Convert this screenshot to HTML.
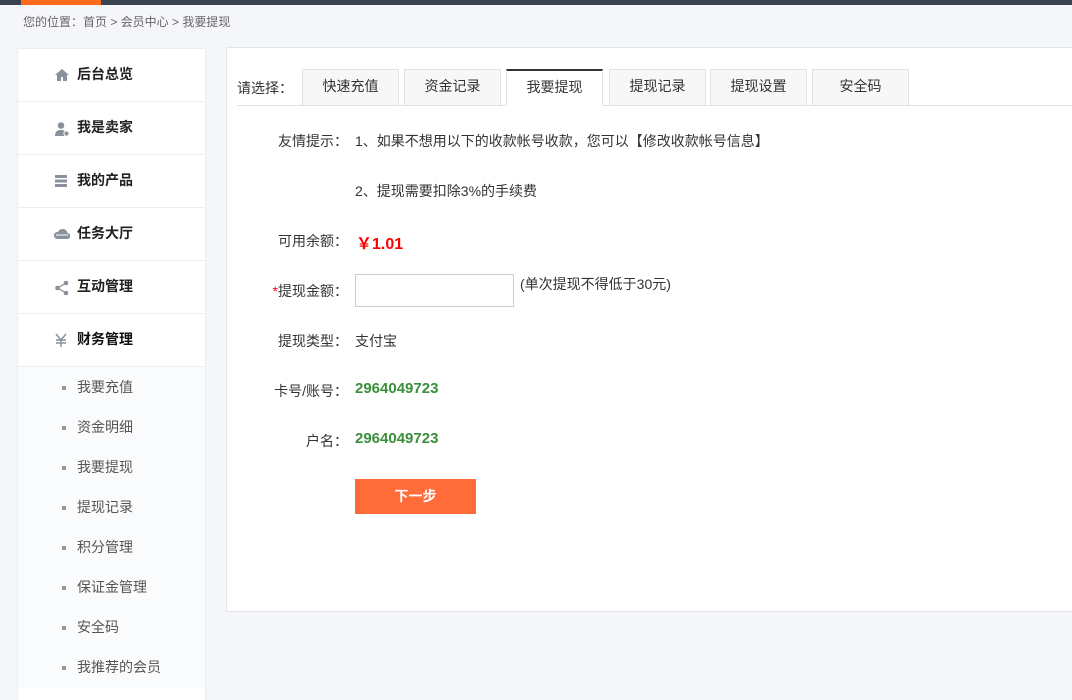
<!DOCTYPE html>
<html><head><meta charset="utf-8"><style>
*{margin:0;padding:0;box-sizing:border-box}
body{width:1072px;height:700px;overflow:hidden;background:#f5f6fa;font-family:"Liberation Sans","Noto Sans CJK SC",sans-serif;font-size:14px;color:#333;position:relative}
.a{position:absolute;white-space:nowrap}
.top{left:0;top:0;width:1072px;height:5px;background:#3a4350}
.topo{left:21px;top:0;width:80px;height:5px;background:#ff6a1a}
.crumb{left:23px;top:13px;font-size:12px;color:#666}
.side{left:17px;top:48px;width:189px;height:652px;background:#fff;border:1px solid #eceef2;border-bottom:none}
.item{position:absolute;left:0;width:187px;height:53px;border-bottom:1px solid #eceef2;font-weight:bold;font-size:14px;color:#222}
.item span{position:absolute;left:59px;top:15px}
.item svg{position:absolute;left:36px;top:19px}
.sub{position:absolute;left:0;top:318px;width:187px;height:321px;background:#fafbfd}
.sub div{position:absolute;left:59px;color:#555;font-size:14px}
.sub div:before{content:"";position:absolute;left:-15px;top:9px;width:4px;height:4px;background:#999}
.main{left:226px;top:47px;width:850px;height:565px;background:#fff;border:1px solid #e3e5ea}
.tab{position:absolute;top:69px;height:37px;width:97px;background:#f7f7f7;border:1px solid #e2e2e2;text-align:center;line-height:33px;color:#333}
.tab.on{background:#fff;border-top:2px solid #333;border-bottom-color:#fff;height:37px;line-height:32px}
.lbl{text-align:right;width:120px;left:228px}
</style></head><body>
<div class="a top"></div><div class="a topo"></div>
<div class="a crumb">您的位置：首页 &gt; 会员中心 &gt; 我要提现</div>
<div class="a side">
<div class="item" style="top:0"><svg width="16" height="14" viewBox="0 0 16 14"><path d="M8 1L1 7h2v6h4V9h2v4h4V7h2z" fill="#8a919c"/></svg><span>后台总览</span></div>
<div class="item" style="top:53px"><svg width="16" height="16" viewBox="0 0 16 16"><circle cx="7" cy="4.5" r="3.3" fill="#8a919c"/><path d="M1 15c0-5 3-6 6-6s6 1 6 6z" fill="#8a919c"/><circle cx="12.5" cy="12.5" r="2.6" fill="#8a919c" stroke="#fff"/></svg><span>我是卖家</span></div>
<div class="item" style="top:106px"><svg width="14" height="14" viewBox="0 0 14 14" fill="#8a919c"><rect x="1" y="1" width="12" height="3"/><rect x="1" y="5.5" width="12" height="3"/><rect x="1" y="10" width="12" height="3"/></svg><span>我的产品</span></div>
<div class="item" style="top:159px"><svg width="16" height="14" viewBox="0 0 16 14"><path d="M3 12h10a3 3 0 0 0 .5-6A5 5 0 0 0 4 5a3.5 3.5 0 0 0-1 7z" fill="#8a919c"/><path d="M2 8h12" stroke="#fff"/></svg><span>任务大厅</span></div>
<div class="item" style="top:212px"><svg width="16" height="16" viewBox="0 0 16 16" fill="#8a919c"><circle cx="12" cy="3" r="2.3"/><circle cx="3.5" cy="8" r="2.3"/><circle cx="12" cy="13" r="2.3"/><path d="M12 3L3.5 8 12 13" stroke="#8a919c" stroke-width="1.3" fill="none"/></svg><span>互动管理</span></div>
<div class="item" style="top:265px"><svg width="14" height="14" viewBox="0 0 14 14" stroke="#8a919c" stroke-width="1.5" fill="none"><path d="M2 1l5 6 5-6M7 7v7M2 7h10M2 10h10"/></svg><span style="color:#111">财务管理</span></div>
<div class="sub">
<div style="top:10px">我要充值</div><div style="top:50px">资金明细</div><div style="top:90px">我要提现</div><div style="top:130px">提现记录</div><div style="top:170px">积分管理</div><div style="top:210px">保证金管理</div><div style="top:250px">安全码</div><div style="top:290px">我推荐的会员</div>
</div>
</div>
<div class="a main"></div>
<div class="a" style="left:237px;top:78px">请选择：</div>
<div class="a" style="left:237px;top:105px;width:835px;height:1px;background:#e2e2e2"></div>
<div class="tab" style="left:302px">快速充值</div>
<div class="tab" style="left:404px">资金记录</div>
<div class="tab on" style="left:506px">我要提现</div>
<div class="tab" style="left:609px">提现记录</div>
<div class="tab" style="left:710px">提现设置</div>
<div class="tab" style="left:812px">安全码</div>
<div class="a lbl" style="top:131px">友情提示：</div>
<div class="a" style="left:355px;top:131px">1、如果不想用以下的收款帐号收款，您可以【修改收款帐号信息】</div>
<div class="a" style="left:355px;top:181px">2、提现需要扣除3%的手续费</div>
<div class="a lbl" style="top:231px">可用余额：</div>
<div class="a" style="left:356px;top:230px;color:#f00;font-weight:bold;font-size:16px">￥1.01</div>
<div class="a lbl" style="top:281px"><span style="color:#f00">*</span>提现金额：</div>
<div class="a" style="left:355px;top:274px;width:159px;height:33px;border:1px solid #ccc;background:#fff"></div>
<div class="a" style="left:520px;top:274px">(单次提现不得低于30元)</div>
<div class="a lbl" style="top:331px">提现类型：</div>
<div class="a" style="left:355px;top:331px">支付宝</div>
<div class="a lbl" style="top:381px">卡号/账号：</div>
<div class="a" style="left:355px;top:380px;color:#3a8f3a;font-weight:bold;font-size:15px">2964049723</div>
<div class="a lbl" style="top:431px">户名：</div>
<div class="a" style="left:355px;top:430px;color:#3a8f3a;font-weight:bold;font-size:15px">2964049723</div>
<div class="a" style="left:355px;top:479px;width:121px;height:35px;background:#ff6b39;color:#fff;font-weight:bold;text-align:center;line-height:35px">下一步</div>
</body></html>
